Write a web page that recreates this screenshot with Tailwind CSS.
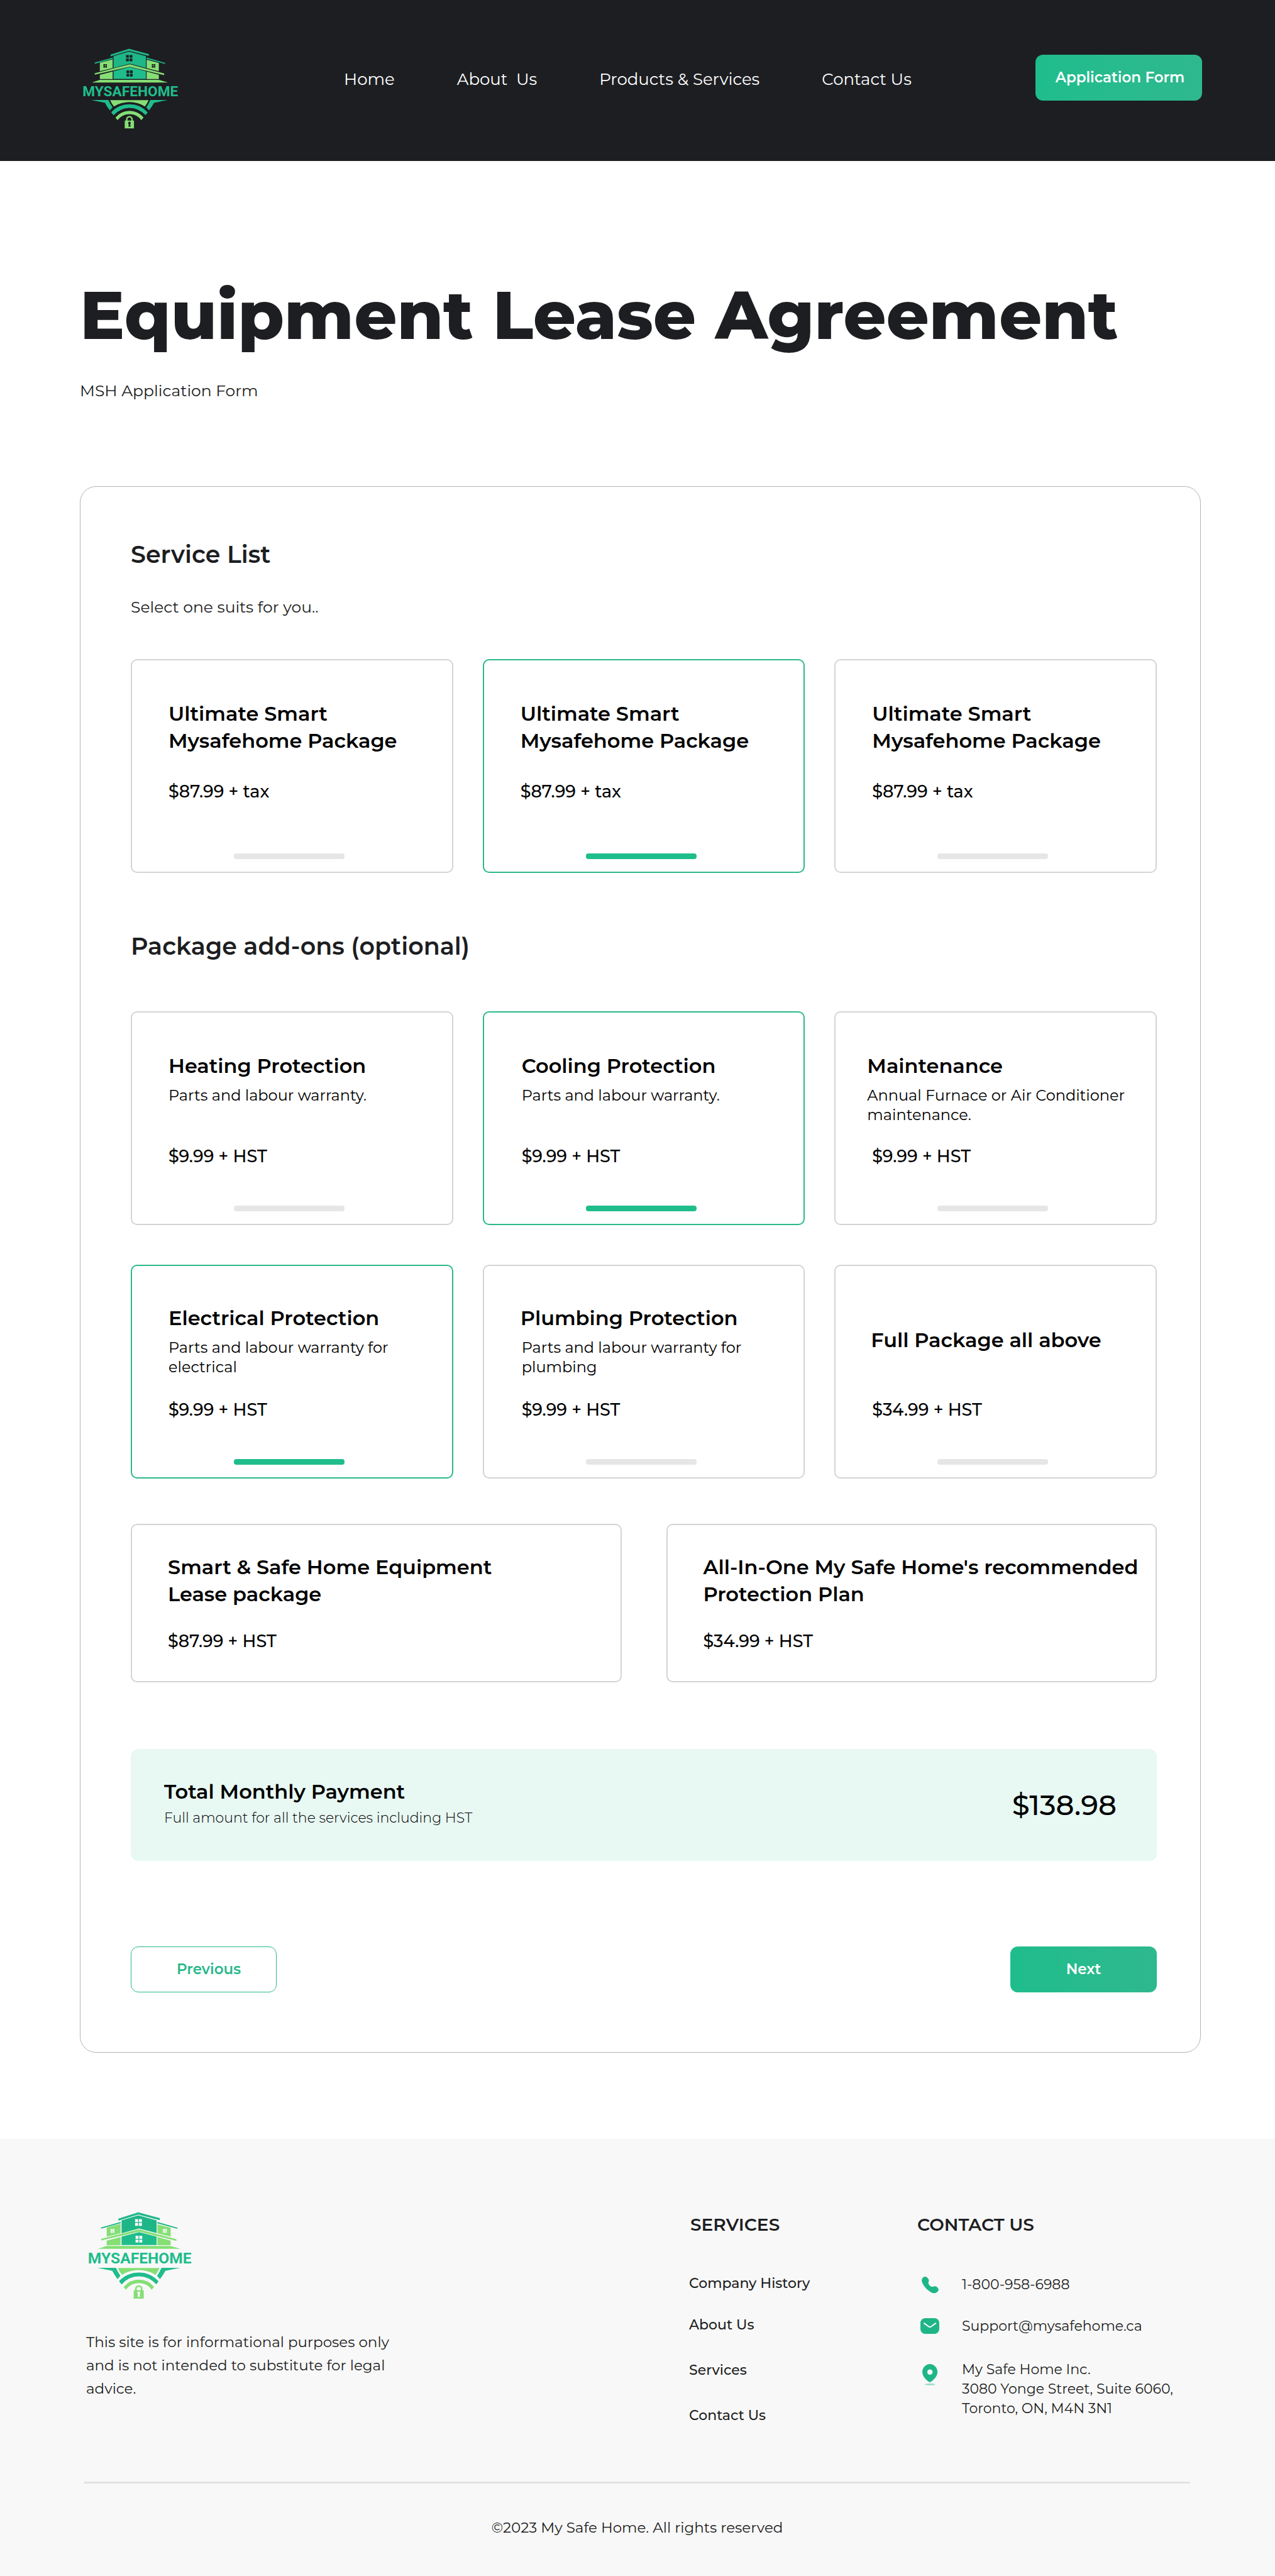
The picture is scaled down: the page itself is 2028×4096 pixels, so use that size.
<!DOCTYPE html>
<html lang="en">
<head>
<meta charset="utf-8">
<meta name="viewport" content="width=device-width, initial-scale=1">
<title>Equipment Lease Agreement - My Safe Home</title>
<script src="https://cdn.jsdelivr.net/npm/@tailwindcss/browser@4"></script>
</head>
<body class="bg-white font-['Montserrat','Inter',sans-serif] text-[#1d1e22]">

<!-- Shared logo; currentColor fills the windows and the keyhole -->
<svg class="hidden" aria-hidden="true">
  <symbol id="logo" viewBox="100 80 670 560">
    <g fill="#1fb687">
      <path d="M300 130L425 91L560 127V140L425 105L300 143Z"/>
      <path d="M320 141L425 110L540 141V221L430 192L320 222Z"/>
      <path d="M192 185L315 151V159L192 193Z"/>
      <path d="M545 151L671 187V194L545 160Z"/>
    </g>
    <g fill="#1fbd8c">
      <path d="M320 243L430 215L540 243V296H320Z"/>
      <path d="M168 439H285Q295 464 313 488L295 510Q276 486 262 458Z"/>
      <path d="M570 439H688L595 458Q580 486 561 510L543 489Q560 464 570 439Z"/>
      <path d="M304 522Q355 468 429 468Q502 468 552 523L538 542Q490 492 429 492Q366 492 320 543Z"/>
    </g>
    <g fill="#85df75">
      <path d="M227 186L314 163V222L227 244Z"/>
      <path d="M545 166L628 187V243L545 222Z"/>
      <path d="M192 257L430 197L664 259V270L430 212L192 267Z"/>
      <path d="M227 268L314 246V297H227Z"/>
      <path d="M545 246L628 268V297H545Z"/>
      <path d="M227 302H628L690 320H172Z"/>
      <path d="M297 440H558Q549 463 533 483Q485 453 429 453Q370 453 323 483Q305 462 297 440Z"/>
      <path d="M333 559Q372 513 429 513Q486 513 524 558L509 576Q480 535 429 535Q378 535 347 576Z"/>
      <path d="M396 579H459V632H396Z"/>
    </g>
    <path d="M410 582V570A18 17 0 0 1 446 570V582" fill="none" stroke="#85df75" stroke-width="10"/>
    <g fill="currentColor">
      <path d="M405 133h19v19h-19zM429 133h19v19h-19zM405 157h19v19h-19zM429 157h19v19h-19z"/>
      <path d="M408 238h18v19h-18zM431 238h19v19h-19zM408 262h18v18h-18zM431 262h19v18h-19z"/>
      <path d="M251 195h11v11h-11zM264 195h11v11h-11zM251 208h11v11h-11zM264 208h11v11h-11z"/>
      <path d="M580 195h11v11h-11zM593 195h11v11h-11zM580 208h11v11h-11zM593 208h11v11h-11z"/>
      <circle cx="428" cy="596" r="9"/>
      <path d="M424 600H433L436 621H421Z"/>
    </g>
    <text x="434" y="413" text-anchor="middle" font-family="Roboto,sans-serif" font-weight="700" font-size="97" fill="#1fbd8c">MYSAFEHOME</text>
  </symbol>
</svg>

<header class="flex h-64 items-start bg-[#1d1e22] pl-[129px] pr-[116px] text-white">
  <a href="#" aria-label="My Safe Home" class="mt-[75px] text-[#1d1e22]"><svg class="h-[131px] w-[157px]"><use href="#logo"/></svg></a>
  <nav class="mt-[108px] ml-[261px] flex gap-[99px] text-[26px] leading-9 whitespace-pre">
    <a href="#">Home</a>
    <a href="#">About  Us</a>
    <a href="#">Products &amp; Services</a>
    <a href="#">Contact Us</a>
  </nav>
  <button type="button" class="mt-[87px] ml-auto h-[73px] w-[265px] rounded-xl bg-linear-to-r from-[#1fbd8c] to-[#2eb88e] pl-1 text-[23px] font-semibold">Application Form</button>
</header>

<main class="pt-[185px] pr-[118px] pb-[137px] pl-[127px]">
  <h1 class="text-[106px] leading-[120px] font-extrabold">Equipment Lease Agreement</h1>
  <p class="mt-[42px] text-[25px] leading-9">MSH Application Form</p>

  <form class="mt-[134px] rounded-[26px] border border-[#b3b3b3] pt-[84px] pr-[69px] pb-[95px] pl-20" onsubmit="return false">
    <h2 class="text-[38px] leading-[48px] font-semibold">Service List</h2>
    <p class="mt-[41px] text-[25px] leading-9">Select one suits for you..</p>

    <div class="mt-[65px] grid grid-cols-3 gap-x-[47px] text-black">
      <label class="flex h-[340px] flex-col rounded-[10px] border-2 border-[#d4d4d4] px-[58px] pt-[63px] pb-5 has-checked:border-[#2ab88c]">
        <span class="text-[32px] leading-[43px] font-semibold">Ultimate Smart<br>Mysafehome Package</span>
        <span class="mt-11 text-[27px] leading-8 font-medium">$87.99 + tax</span>
        <input type="radio" name="service" class="mt-auto ml-[104px] h-[9px] w-44 appearance-none rounded bg-[#e6e6e6] checked:bg-[#1fbd8c]">
      </label>
      <label class="flex h-[340px] flex-col rounded-[10px] border-2 border-[#d4d4d4] px-[58px] pt-[63px] pb-5 has-checked:border-[#2ab88c]">
        <span class="text-[32px] leading-[43px] font-semibold">Ultimate Smart<br>Mysafehome Package</span>
        <span class="mt-11 text-[27px] leading-8 font-medium">$87.99 + tax</span>
        <input type="radio" name="service" checked class="mt-auto ml-[104px] h-[9px] w-44 appearance-none rounded bg-[#e6e6e6] checked:bg-[#1fbd8c]">
      </label>
      <label class="flex h-[340px] flex-col rounded-[10px] border-2 border-[#d4d4d4] px-[58px] pt-[63px] pb-5 has-checked:border-[#2ab88c]">
        <span class="text-[32px] leading-[43px] font-semibold">Ultimate Smart<br>Mysafehome Package</span>
        <span class="mt-11 text-[27px] leading-8 font-medium">$87.99 + tax</span>
        <input type="radio" name="service" class="mt-auto ml-[104px] h-[9px] w-44 appearance-none rounded bg-[#e6e6e6] checked:bg-[#1fbd8c]">
      </label>
    </div>

    <h2 class="mt-[93px] text-[38px] leading-[48px] font-semibold">Package add-ons (optional)</h2>

    <div class="mt-[79px] grid grid-cols-3 gap-x-[47px] gap-y-[63px] text-black">
      <label class="flex h-[340px] flex-col rounded-[10px] border-2 border-[#d4d4d4] pt-[63px] pb-5 pl-[58px] has-checked:border-[#2ab88c]">
        <span class="text-[32px] leading-[43px] font-semibold">Heating Protection</span>
        <span class="mt-[10px] text-[24px] leading-[31px]">Parts and labour warranty.</span>
        <span class="mt-auto text-[27px] leading-8 font-medium">$9.99 + HST</span>
        <input type="checkbox" class="mt-[62px] ml-[104px] h-[9px] w-44 appearance-none rounded bg-[#e6e6e6] checked:bg-[#1fbd8c]">
      </label>
      <label class="flex h-[340px] flex-col rounded-[10px] border-2 border-[#d4d4d4] pt-[63px] pb-5 pl-[60px] has-checked:border-[#2ab88c]">
        <span class="text-[32px] leading-[43px] font-semibold">Cooling Protection</span>
        <span class="mt-[10px] text-[24px] leading-[31px]">Parts and labour warranty.</span>
        <span class="mt-auto text-[27px] leading-8 font-medium">$9.99 + HST</span>
        <input type="checkbox" checked class="mt-[62px] ml-[102px] h-[9px] w-44 appearance-none rounded bg-[#e6e6e6] checked:bg-[#1fbd8c]">
      </label>
      <label class="flex h-[340px] flex-col rounded-[10px] border-2 border-[#d4d4d4] pt-[63px] pb-5 pl-[50px] has-checked:border-[#2ab88c]">
        <span class="text-[32px] leading-[43px] font-semibold">Maintenance</span>
        <span class="mt-[10px] text-[24px] leading-[31px]">Annual Furnace or Air Conditioner<br>maintenance.</span>
        <span class="mt-auto ml-2 text-[27px] leading-8 font-medium">$9.99 + HST</span>
        <input type="checkbox" class="mt-[62px] ml-[112px] h-[9px] w-44 appearance-none rounded bg-[#e6e6e6] checked:bg-[#1fbd8c]">
      </label>
      <label class="flex h-[340px] flex-col rounded-[10px] border-2 border-[#d4d4d4] pt-[61px] pb-5 pl-[58px] has-checked:border-[#2ab88c]">
        <span class="text-[32px] leading-[43px] font-semibold">Electrical Protection</span>
        <span class="mt-[10px] text-[24px] leading-[31px]">Parts and labour warranty for<br>electrical</span>
        <span class="mt-auto text-[27px] leading-8 font-medium">$9.99 + HST</span>
        <input type="checkbox" checked class="mt-[62px] ml-[104px] h-[9px] w-44 appearance-none rounded bg-[#e6e6e6] checked:bg-[#1fbd8c]">
      </label>
      <label class="flex h-[340px] flex-col rounded-[10px] border-2 border-[#d4d4d4] pt-[61px] pb-5 pl-[58px] has-checked:border-[#2ab88c]">
        <span class="text-[32px] leading-[43px] font-semibold">Plumbing Protection</span>
        <span class="mt-[10px] ml-[2px] text-[24px] leading-[31px]">Parts and labour warranty for<br>plumbing</span>
        <span class="mt-auto ml-[2px] text-[27px] leading-8 font-medium">$9.99 + HST</span>
        <input type="checkbox" class="mt-[62px] ml-[104px] h-[9px] w-44 appearance-none rounded bg-[#e6e6e6] checked:bg-[#1fbd8c]">
      </label>
      <label class="flex h-[340px] flex-col rounded-[10px] border-2 border-[#d4d4d4] pt-24 pb-5 pl-14 has-checked:border-[#2ab88c]">
        <span class="text-[32px] leading-[43px] font-semibold">Full Package all above</span>
        <span class="mt-auto ml-[2px] text-[27px] leading-8 font-medium">$34.99 + HST</span>
        <input type="checkbox" class="mt-[62px] ml-[106px] h-[9px] w-44 appearance-none rounded bg-[#e6e6e6] checked:bg-[#1fbd8c]">
      </label>
    </div>

    <div class="mt-[72px] grid grid-cols-2 gap-x-[71px] text-black">
      <label class="relative flex h-[252px] flex-col rounded-[10px] border-2 border-[#d4d4d4] pt-[45px] pl-[57px] has-checked:border-[#2ab88c]">
        <input type="checkbox" class="sr-only">
        <span class="text-[32px] leading-[43px] font-semibold">Smart &amp; Safe Home Equipment<br>Lease package</span>
        <span class="mt-[38px] text-[27px] leading-8 font-medium">$87.99 + HST</span>
      </label>
      <label class="relative flex h-[252px] flex-col rounded-[10px] border-2 border-[#d4d4d4] pt-[45px] pl-[57px] has-checked:border-[#2ab88c]">
        <input type="checkbox" class="sr-only">
        <span class="text-[32px] leading-[43px] font-semibold">All-In-One My Safe Home's recommended<br>Protection Plan</span>
        <span class="mt-[38px] text-[27px] leading-8 font-medium">$34.99 + HST</span>
      </label>
    </div>

    <section class="mt-[106px] flex h-[178px] items-center justify-between rounded-xl bg-[#e8f8f3] pr-16 pl-[53px] text-black">
      <div>
        <h3 class="text-[32px] leading-[42px] font-semibold">Total Monthly Payment</h3>
        <p class="text-[22px] leading-[42px] font-light">Full amount for all the services including HST</p>
      </div>
      <p class="text-[45px] leading-[48px] font-medium">$138.98</p>
    </section>

    <div class="mt-[136px] flex justify-between">
      <button type="button" class="h-[73px] w-[232px] rounded-xl border border-[#2ab88c] pl-4 text-[23px] font-semibold text-[#2ab88c]">Previous</button>
      <button type="submit" class="h-[73px] w-[233px] rounded-xl bg-linear-to-r from-[#1fbd8c] to-[#2eb88e] text-[23px] font-semibold text-white">Next</button>
    </div>
  </form>
</main>

<footer class="bg-[#f8f8f8] pr-[135px] pl-[134px]">
  <div class="flex">
    <div class="flex-1 pt-[114px] pl-[3px]">
      <svg class="h-[142px] w-[171px] text-[#f8f8f8]" role="img" aria-label="My Safe Home"><use href="#logo"/></svg>
      <p class="mt-[49px] w-[520px] text-[23px] leading-[37px]">This site is for informational purposes only<br>and is not intended to substitute for legal<br>advice.</p>
    </div>
    <div class="w-[363px] pt-[118px]">
      <h4 class="pl-[2px] text-[28px] leading-9 font-semibold">SERVICES</h4>
      <ul class="text-[22px] leading-8 font-medium">
        <li class="mt-[60px]"><a href="#">Company History</a></li>
        <li class="mt-[34px]"><a href="#">About Us</a></li>
        <li class="mt-10"><a href="#">Services</a></li>
        <li class="mt-10"><a href="#">Contact Us</a></li>
      </ul>
    </div>
    <div class="w-[434px] pt-[118px]">
      <h4 class="text-[28px] leading-9 font-semibold">CONTACT US</h4>
      <ul class="text-[22px] leading-[31px]">
        <li class="mt-[62px] flex items-center pl-[5px]">
          <svg class="mr-9 h-[30px] w-[30px]" viewBox="60 58 128 128" fill="#1fb687" aria-hidden="true"><path d="M76 74C84 66 96 63 103 70L114 82C120 89 117 96 115 104C113 113 117 121 124 127C131 134 139 137 148 134C156 131 164 130 170 135L179 144C186 151 184 160 177 168C167 179 152 182 139 176C109 161 84 136 72 106C67 94 68 82 76 74Z"/></svg>
          <a href="tel:18009586988">1-800-958-6988</a>
        </li>
        <li class="mt-[35px] flex items-center pl-[5px]">
          <svg class="mr-9 h-[25px] w-[30px]" viewBox="60 348 127 105" aria-hidden="true"><rect x="60" y="348" width="127" height="105" rx="32" fill="#1fb687"/><path d="M85 382L115 404Q124 410 133 404L163 382" fill="none" stroke="#fff" stroke-width="8" stroke-linecap="round"/></svg>
          <a href="mailto:Support@mysafehome.ca">Support@mysafehome.ca</a>
        </li>
        <li class="mt-[38px] flex items-start pl-[5px]">
          <svg class="mt-[7px] mr-9 h-[34px] w-[30px]" viewBox="65 662 127 144" aria-hidden="true"><path fill-rule="evenodd" d="M129 662C157 662 180 686 180 715C180 745 155 768 137 781Q129 787 121 781C103 768 78 745 78 715C78 686 101 662 129 662ZM129 698a18 18 0 1 0 0 36a18 18 0 1 0 0-36Z" fill="#1fb687"/><ellipse cx="129" cy="799" rx="36" ry="7" fill="#1fb687" opacity=".4"/></svg>
          <address class="not-italic">My Safe Home Inc.<br>3080 Yonge Street, Suite 6060,<br>Toronto, ON, M4N 3N1</address>
        </li>
      </ul>
    </div>
  </div>
  <hr class="mt-[89px] border-t-[3px] border-[#e2e2e2]">
  <p class="pt-[52px] pb-[59px] text-center text-[23px] leading-9">©2023 My Safe Home. All rights reserved</p>
</footer>
</body>
</html>
